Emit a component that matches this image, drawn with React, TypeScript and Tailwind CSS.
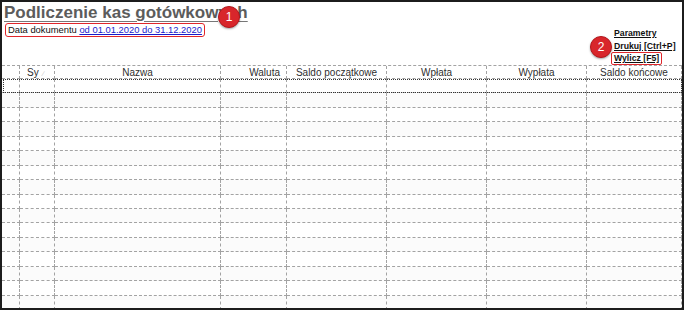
import React from 'react';

const columns = [
  { label: '', align: 'text-center' },
  { label: 'Sy', align: 'text-left pl-[7px]' },
  { label: 'Nazwa', align: 'text-center' },
  { label: 'Waluta', align: 'text-right pr-[6px]' },
  { label: 'Saldo początkowe', align: 'text-center' },
  { label: 'Wpłata', align: 'text-center' },
  { label: 'Wypłata', align: 'text-center' },
  { label: 'Saldo końcowe', align: 'text-center' },
];

const gridCols = 'grid grid-cols-[18px_35px_166px_66px_100px_100px_100px_1fr]';
const rows = Array.from({ length: 16 }, (_, i) => i);

const Badge: React.FC<{ n: string; className: string }> = ({ n, className }) => (
  <div
    className={`absolute w-[22px] h-[22px] rounded-full bg-[#d8262b] border border-[#b5161b] shadow-[0_1px_2px_rgba(0,0,0,0.35)] flex items-center justify-center text-white text-[12px] leading-none ${className}`}
  >
    {n}
  </div>
);

export default function App() {
  return (
    <div className="relative w-[684px] h-[310px] overflow-hidden bg-white border-2 border-[#1c1c1c] font-['Liberation_Sans',Arial,sans-serif]">
      {/* top bar */}
      <div className="h-[63px] flex justify-between">
        <div className="pl-[2px]">
          <h1 className="pt-[1px] text-[17px] leading-[20px] font-bold text-[#5c5c5c] underline underline-offset-[3px] decoration-[#777]">
            Podliczenie kas gotówkowych
          </h1>
          <div className="w-fit ml-[1px] flex items-center h-[14px] px-[2px] border-[1.5px] border-[#e0262b] rounded-[3px] text-[9.4px] leading-none text-[#111]">
            <span>Data dokumentu&nbsp;</span>
            <span className="text-[#1a1acc] underline">od 01.01.2020 do 31.12.2020</span>
          </div>
        </div>
        <div className="w-[68px] pt-[25px] text-[8.7px] font-bold text-[#111] leading-[12.5px]">
          <div className="underline">Parametry</div>
          <div className="underline">Drukuj [Ctrl+P]</div>
          <div className="-ml-[3px] w-fit px-[2px] h-[13px] leading-[11px] border-[1.5px] border-[#e0262b] rounded-[2px]">
            <span className="underline">Wylicz [F5]</span>
          </div>
        </div>
      </div>

      {/* header */}
      <div className={`${gridCols} h-[14px] border-t border-dashed border-[#a3a3a3]`}>
        {columns.map((c, i) => (
          <div
            key={i}
            className={`border-r border-b border-dashed border-[#a3a3a3] text-[10px] leading-[13px] text-[#2f2f2f] whitespace-nowrap overflow-hidden ${c.align}`}
          >
            {c.label}
            {c.label === 'Sy' && <span className="ml-[4px] text-[7px] text-[#c4c4c4]">∕</span>}
          </div>
        ))}
      </div>

      {/* rows */}
      {rows.map((r) => (
        <div
          key={r}
          className={`relative ${gridCols} h-[14.45px] ${r % 2 === 0 ? 'bg-white' : 'bg-[#fbfbfb]'}`}
        >
          {columns.map((_, i) => (
            <div key={i} className="border-r border-b border-dashed border-[#a3a3a3]" />
          ))}
          {r === 0 && (
            <div className="absolute left-[1px] right-0 top-0 bottom-0 border border-dotted border-[#333]" />
          )}
        </div>
      ))}

      <Badge n="1" className="left-[216px] top-[4px]" />
      <Badge n="2" className="left-[588px] top-[34px]" />
    </div>
  );
}
